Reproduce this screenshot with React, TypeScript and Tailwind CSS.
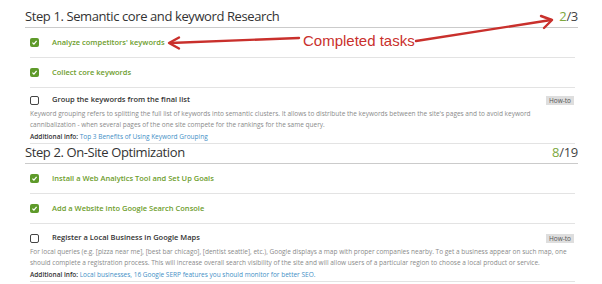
import React from "react";

const green = "text-[#6d9d2c]";

function Checked() {
  return (
    <span className="w-[9px] h-[9px] rounded-[2px] bg-[#5e9a2a] flex items-center justify-center shrink-0">
      <svg width="7" height="7" viewBox="0 0 10 10">
        <path d="M2 5.2 L4.2 7.3 L8 2.8" fill="none" stroke="#fff" strokeWidth="1.8" />
      </svg>
    </span>
  );
}

function Unchecked() {
  return <span className="w-[9px] h-[9px] rounded-[2px] border border-[#444] bg-white shrink-0" />;
}

function Heading({ title, done, total, first }: { title: string; done: number; total: number; first?: boolean }) {
  return (
    <div
      className={`flex items-end justify-between border-b border-[#cbcbcb] pb-[4px] ${first ? "h-[28px]" : "h-[20px]"}`}
    >
      <h2 className="text-[13px] leading-[14px] text-[#333] tracking-[-0.4px]">{title}</h2>
      <span className="text-[13px] leading-[14px] text-[#444] tracking-[-0.3px]">
        <span className="text-[#7da83c]">{done}</span>/{total}
      </span>
    </div>
  );
}

function DoneTask({ label }: { label: string }) {
  return (
    <div className="h-[30px] ml-[5px] mr-[3px] border-b border-[#e3e3e3] flex items-center gap-[13px]">
      <Checked />
      <span className={`text-[7.5px] font-semibold ${green}`}>{label}</span>
    </div>
  );
}

function OpenTask({
  label,
  lines,
  links,
  top,
}: {
  label: string;
  lines: string[];
  links: string;
  top: string;
}) {
  return (
    <div className={`ml-[5px] mr-[3px] border-b border-[#e3e3e3] ${top}`}>
      <div className="flex items-center h-[12px]">
        <Unchecked />
        <span className="ml-[13px] text-[7.5px] font-semibold text-[#333]">{label}</span>
        <span className="ml-auto bg-[#dedede] text-[#555] text-[6.5px] leading-[9px] px-[3px] mr-[1px]">How-to</span>
      </div>
      <p className="mt-[2px] text-[6.5px] leading-[11px] text-[#8a8a8a]">
        {lines[0]}
        <br />
        {lines[1]}
      </p>
      <p className="mt-[1px] pb-[1px] text-[6.5px] leading-[11px] text-[#888]">
        <span className="font-semibold text-[#333]">Additional info: </span>
        <span className="text-[#3f8fc6]">{links}</span>
      </p>
    </div>
  );
}

export default function App() {
  return (
    <div className="relative w-[602px] h-[284px] bg-white overflow-hidden font-['Open_Sans',sans-serif]">
      <div className="pl-[25px] pr-[24px]">
        <Heading first title="Step 1. Semantic core and keyword Research" done={2} total={3} />
        <DoneTask label="Analyze competitors' keywords" />
        <DoneTask label="Collect core keywords" />
        <OpenTask
          top="pt-[6px]"
          label="Group the keywords from the final list"
          lines={[
            "Keyword grouping refers to splitting the full list of keywords into semantic clusters. It allows to distribute the keywords between the site's pages and to avoid keyword",
            "cannibalization - when several pages of the one site compete for the rankings for the same query.",
          ]}
          links="Top 3 Benefits of Using Keyword Grouping"
        />

        <Heading title="Step 2. On-Site Optimization" done={8} total={19} />
        <DoneTask label="Install a Web Analytics Tool and Set Up Goals" />
        <DoneTask label="Add a Website into Google Search Console" />
        <OpenTask
          top="pt-[8px]"
          label="Register a Local Business in Google Maps"
          lines={[
            "For local queries (e.g. [pizza near me], [best bar chicago], [dentist seattle], etc.), Google displays a map with proper companies nearby. To get a business appear on such map, one",
            "should complete a registration process. This will increase overall search visibility of the site and will allow users of a particular region to choose a local product or service.",
          ]}
          links="Local businesses, 16 Google SERP features you should monitor for better SEO."
        />
      </div>

      {/* annotation overlay */}
      <svg className="absolute left-0 top-0 pointer-events-none" width="602" height="284">
        <g fill="none" stroke="#c9302c" strokeWidth="2.4" strokeLinecap="round" strokeLinejoin="round">
          <path d="M299 38 L170 43" />
          <path d="M179 37.5 L169 43 L179 48.5" />
          <path d="M416 41 L551 20" />
          <path d="M541 16 L552 20 L544 28" />
        </g>
      </svg>
      <span className="absolute left-[303px] top-[32px] text-[15px] leading-[18px] text-[#c9302c] font-['Liberation_Sans',Arial,sans-serif]">
        Completed tasks
      </span>
    </div>
  );
}
